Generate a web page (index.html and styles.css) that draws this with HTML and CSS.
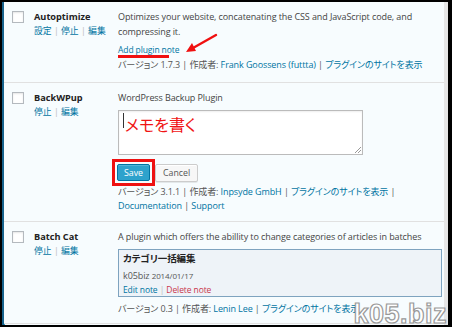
FILE: index.html
```html
<!DOCTYPE html>
<html lang="ja">
<head>
    <meta charset="UTF-8">
    <title>Plugins</title>
    <link rel="stylesheet" href="styles.css">
</head>
<body>
    <div class="frame">
        <div class="plugins">
            <!-- Autoptimize -->
            <div class="plugin first">
                <div class="check"><span class="cb"></span></div>
                <div class="name">
                    <strong>Autoptimize</strong>
                    <div class="actions"><a href="#">設定</a> <span class="sep">|</span> <a href="#">停止</a> <span class="sep">|</span> <a href="#">編集</a></div>
                </div>
                <div class="desc">
                    <p>Optimizes your website, concatenating the CSS and JavaScript code, and compressing it.</p>
                    <div class="add-note"><a href="#">Add plugin note</a></div>
                    <div class="meta">バージョン 1.7.3 | 作成者: <a href="#">Frank Goossens (futtta)</a> | <a href="#">プラグインのサイトを表示</a></div>
                </div>
                <svg class="arrow" width="40" height="28" viewBox="0 0 40 28">
                    <line x1="34" y1="5" x2="11" y2="18" stroke="#f01010" stroke-width="2.4" stroke-linecap="round"/>
                    <polygon points="4,22 10,13 14,21" fill="#f01010"/>
                </svg>
            </div>

            <!-- BackWPup -->
            <div class="plugin">
                <div class="check"><span class="cb"></span></div>
                <div class="name">
                    <strong>BackWPup</strong>
                    <div class="actions"><a href="#">停止</a> <span class="sep">|</span> <a href="#">編集</a></div>
                </div>
                <div class="desc">
                    <p>WordPress Backup Plugin</p>
                    <div class="memo">
                        <span class="caret"></span><span class="memo-text">メモを書く</span>
                        <svg class="grip" width="7" height="7" viewBox="0 0 7 7">
                            <line x1="1" y1="7" x2="7" y2="1" stroke="#999"/>
                            <line x1="4" y1="7" x2="7" y2="4" stroke="#999"/>
                        </svg>
                    </div>
                    <div class="buttons">
                        <span class="highlight"><button class="btn btn-save">Save</button></span>
                        <button class="btn">Cancel</button>
                    </div>
                    <div class="meta">バージョン 3.1.1 | 作成者: <a href="#">Inpsyde GmbH</a> | <a href="#">プラグインのサイトを表示</a> |<br><a href="#">Documentation</a> | <a href="#">Support</a></div>
                </div>
            </div>

            <!-- Batch Cat -->
            <div class="plugin last">
                <div class="check"><span class="cb"></span></div>
                <div class="name">
                    <strong>Batch Cat</strong>
                    <div class="actions"><a href="#">停止</a> <span class="sep">|</span> <a href="#">編集</a></div>
                </div>
                <div class="desc">
                    <p>A plugin which offers the abillity to change categories of articles in batches</p>
                    <div class="note">
                        <div class="note-title">カテゴリ一括編集</div>
                        <div class="note-meta">k05biz <small>2014/01/17</small></div>
                        <div class="note-links"><a href="#">Edit note</a> <span class="sep">|</span> <a href="#" class="delete">Delete note</a></div>
                    </div>
                    <div class="meta">バージョン 0.3 | 作成者: <a href="#">Lenin Lee</a> | <a href="#">プラグインのサイトを表示</a></div>
                </div>
            </div>
        </div>

        <div class="watermark">k05.biz</div>
    </div>
</body>
</html>
```

FILE: styles.css
```css
/* General */
body {
    margin: 0;
    font-family: "Open Sans", "Noto Sans CJK JP", sans-serif;
    font-size: 9px;
    line-height: 15px;
    color: #444;
    background: #000;
    font-feature-settings: "palt";
}

a {
    color: #0074a2;
    text-decoration: none;
}

p {
    margin: 0;
}

/* Screenshot frame */
.frame {
    width: 452px;
    height: 327px;
    box-sizing: border-box;
    border: 2px solid #000;
    border-right-width: 4px;
    background: #e6e6e6;
    position: relative;
    overflow: hidden;
}

.plugins {
    margin-right: 4px;
    height: 100%;
    border-left: 2px solid #17638d;
    box-shadow: inset 1px 0 0 #2ea2cc;
    background: #f7fcfe;
}

/* Plugin rows */
.plugin {
    display: grid;
    grid-template-columns: 30px 84px 1fr;
    padding: 7px 0 8px;
    border-bottom: 1px solid #e1e1e1;
    background: #f7fcfe;
    position: relative;
}

.plugin.first {
    padding-bottom: 10px;
}

.plugin.last {
    padding-bottom: 7px;
}

.check {
    padding: 2px 0 0 8px;
}

.cb {
    display: block;
    width: 10px;
    height: 10px;
    border: 1px solid #b4b9be;
    background: #fff;
    box-shadow: inset 0 1px 2px rgba(0, 0, 0, 0.1);
}

.name strong {
    display: block;
    color: #222;
    font-weight: 700;
    font-size: 9.2px;
}

.actions {
    font-size: 8.8px;
}

.sep {
    color: #bbb;
}

.desc {
    padding-right: 2px;
    letter-spacing: -0.1px;
}

.desc p {
    color: #444;
}

.meta {
    color: #555;
    line-height: 14px;
    margin-top: 1px;
}

/* Add plugin note + red annotations */
.add-note {
    margin-top: 4px;
    font-size: 8.5px;
    line-height: 14px;
    position: relative;
}

.add-note::after {
    content: "";
    position: absolute;
    left: 0;
    top: 12px;
    width: 51px;
    height: 3px;
    background: #f01010;
}

.arrow {
    position: absolute;
    left: 178px;
    top: 28px;
}

/* Memo textarea */
.memo {
    width: 245px;
    height: 45px;
    margin-top: 5px;
    box-sizing: border-box;
    border: 1px solid #bbb;
    background: #fff;
    box-shadow: inset 0 1px 2px rgba(0, 0, 0, 0.07);
    position: relative;
    display: flex;
    align-items: flex-start;
    padding: 2px 0 0 4px;
}

.caret {
    width: 1px;
    height: 15px;
    background: #333;
    margin-right: 1px;
}

.memo-text {
    color: #f01414;
    font-size: 16px;
    line-height: 22px;
    letter-spacing: 0;
    margin-top: 1px;
}

.grip {
    position: absolute;
    right: 1px;
    bottom: 1px;
}

/* Buttons */
.buttons {
    display: flex;
    align-items: center;
    margin-top: 4px;
}

.highlight {
    display: flex;
    margin-left: -6px;
    padding: 2px;
    border: 3px solid #ee1111;
}

.btn {
    font-family: inherit;
    font-size: 8.8px;
    height: 18px;
    padding: 0 7px;
    border: 1px solid #ccc;
    border-radius: 2px;
    background: #f7f7f7;
    color: #555;
    box-shadow: inset 0 1px 0 #fff, 0 1px 0 rgba(0, 0, 0, 0.08);
}

.btn-save {
    background: #2ea2cc;
    border-color: #0074a2;
    color: #fff;
    width: 33px;
    height: 17px;
    padding: 0;
    box-shadow: inset 0 1px 0 rgba(120, 200, 230, 0.5);
}

.buttons + .meta {
    margin-top: -1px;
}

/* Note box */
.note {
    margin: 5px 0 5px;
    height: 48px;
    box-sizing: border-box;
    border: 1px solid #7ea3bf;
    background: #eef3f8;
    padding: 1px 4px 0;
}

.note-title {
    font-weight: 700;
    color: #222;
    font-size: 9.5px;
}

.note-meta {
    margin-top: 2px;
    color: #555;
}

.note-meta small {
    font-size: 8px;
}

.note-links {
    font-size: 8.5px;
    line-height: 13px;
}

.delete {
    color: #c9364d;
}

/* Watermark */
.watermark {
    position: absolute;
    right: 1px;
    bottom: -4px;
    font-family: "Liberation Sans", Arial, sans-serif;
    font-weight: 700;
    font-size: 27px;
    line-height: 30px;
    color: #fff;
    -webkit-text-stroke: 1.2px #999;
    letter-spacing: 0.5px;
}
```
